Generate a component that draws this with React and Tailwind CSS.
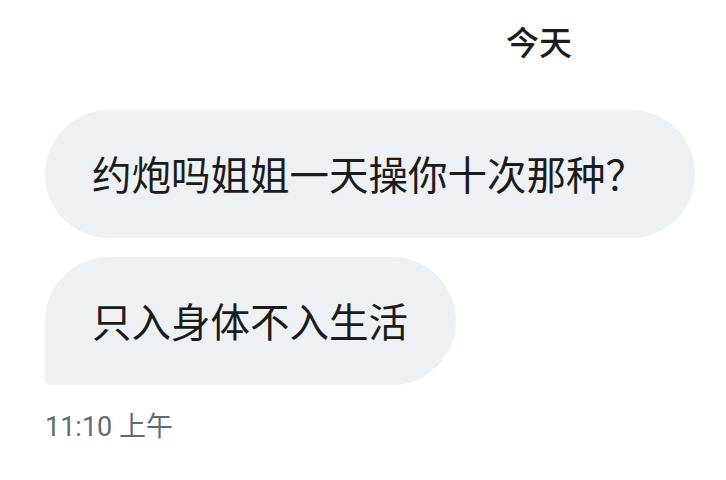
export default function App() {
  return (
    <div className="w-[726px] h-[480px] bg-white overflow-hidden font-['Roboto','Noto_Sans_CJK_SC',sans-serif]">
      <div className="pl-[506px] pt-[27px] text-[33px] leading-none font-medium text-[#1c1c1c]">今天</div>

      <div className="pl-[45px] pt-[50px] flex flex-col items-start gap-[19px]">
        <div className="h-[128px] flex items-center pt-[6px] pl-[47px] pr-[50px] rounded-[64px] bg-[#eef1f3] text-[39.5px] leading-none text-[#1b1b1b]">
          约炮吗姐姐一天操你十次那种？
        </div>
        <div className="h-[128px] flex items-center pt-[6px] pl-[47px] pr-[48px] rounded-[64px] rounded-bl-[6px] bg-[#eef1f3] text-[39.5px] leading-none text-[#1b1b1b]">
          只入身体不入生活
        </div>
      </div>

      <div className="pl-[45px] pt-[29px] text-[27px] leading-none text-[#5f6a72]">11:10 上午</div>
    </div>
  )
}
